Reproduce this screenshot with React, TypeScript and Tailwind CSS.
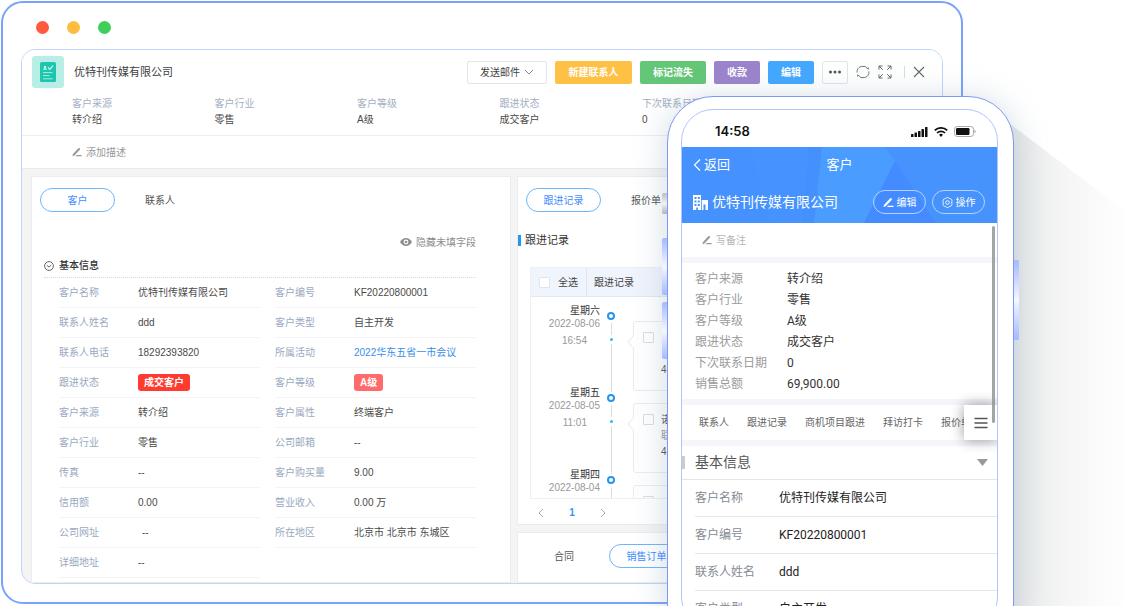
import React from "react";

type Field = {
  label: string;
  value: string;
  kind?: "link" | "red" | "coral" | "indent";
};

const summary: Field[] = [
  { label: "客户来源", value: "转介绍" },
  { label: "客户行业", value: "零售" },
  { label: "客户等级", value: "A级" },
  { label: "跟进状态", value: "成交客户" },
  { label: "下次联系日期", value: "0" },
];

const leftFields: Field[] = [
  { label: "客户名称", value: "优特刊传媒有限公司" },
  { label: "联系人姓名", value: "ddd" },
  { label: "联系人电话", value: "18292393820" },
  { label: "跟进状态", value: "成交客户", kind: "red" },
  { label: "客户来源", value: "转介绍" },
  { label: "客户行业", value: "零售" },
  { label: "传真", value: "--" },
  { label: "信用额", value: "0.00" },
  { label: "公司网址", value: "--", kind: "indent" },
  { label: "详细地址", value: "--" },
];

const rightFields: Field[] = [
  { label: "客户编号", value: "KF20220800001" },
  { label: "客户类型", value: "自主开发" },
  { label: "所属活动", value: "2022华东五省一市会议", kind: "link" },
  { label: "客户等级", value: "A级", kind: "coral" },
  { label: "客户属性", value: "终端客户" },
  { label: "公司邮箱", value: "--" },
  { label: "客户购买量", value: "9.00" },
  { label: "营业收入", value: "0.00 万" },
  { label: "所在地区", value: "北京市 北京市 东城区" },
];

const timeline = [
  { day: "星期六", date: "2022-08-06", time: "16:54", lines: ["", "", "4"] },
  { day: "星期五", date: "2022-08-05", time: "11:01", lines: ["诺", "联", "4"] },
  { day: "星期四", date: "2022-08-04", time: "", lines: ["", "", ""] },
];

const phoneSummary: Field[] = [
  { label: "客户来源", value: "转介绍" },
  { label: "客户行业", value: "零售" },
  { label: "客户等级", value: "A级" },
  { label: "跟进状态", value: "成交客户" },
  { label: "下次联系日期", value: "0" },
  { label: "销售总额", value: "69,900.00" },
];

const phoneFields: Field[] = [
  { label: "客户名称", value: "优特刊传媒有限公司" },
  { label: "客户编号", value: "KF20220800001" },
  { label: "联系人姓名", value: "ddd" },
  { label: "客户类型", value: "自主开发" },
];

function PencilIcon({ className }: { className: string }) {
  return (
    <svg viewBox="0 0 12 12" className={className} fill="currentColor" aria-hidden="true">
      <path d="M1 8.6 7.6 1.6a1.2 1.2 0 0 1 1.8 1.7L3 10.1.6 11z" />
      <path d="M5.6 9.6h5.9V11H4.4z" />
    </svg>
  );
}

function Chevron({ d, className }: { d: string; className: string }) {
  return (
    <svg viewBox="0 0 10 10" className={className} fill="none" stroke="currentColor" strokeWidth="1" aria-hidden="true">
      <path d={d} />
    </svg>
  );
}

function FieldValue({ field }: { field: Field }) {
  if (field.kind === "link") {
    return (
      <a href="#activity" className="text-[#3a8ee6]">
        {field.value}
      </a>
    );
  }
  if (field.kind === "red") {
    return <span className="rounded-[3px] bg-[#ff3b2f] px-[6px] py-[3px] font-bold text-white">{field.value}</span>;
  }
  if (field.kind === "coral") {
    return <span className="rounded-[3px] bg-[#ff6b6b] px-[6px] py-[3px] font-bold text-white">{field.value}</span>;
  }
  return <span className={field.kind === "indent" ? "pl-1" : ""}>{field.value}</span>;
}

function FieldList({ fields }: { fields: Field[] }) {
  return (
    <dl className="text-[10px] leading-[13px]">
      {fields.map((f) => (
        <div key={f.label} className="flex h-[30px] items-center border-b border-[#f3f3f5] whitespace-nowrap">
          <dt className="w-[79px] shrink-0 text-[#99a9bf]">{f.label}</dt>
          <dd className="text-[#4a4a4a]">
            <FieldValue field={f} />
          </dd>
        </div>
      ))}
    </dl>
  );
}

function RecordHeader() {
  return (
    <header className="bg-white">
      <div className="flex h-[46px] items-start justify-between pt-[6px] pr-[17px] pl-[10px]">
        <div className="flex items-center gap-[10px]">
          <span className="flex h-8 w-8 items-center justify-center rounded-[3px] bg-[#b9eee6]">
            <svg viewBox="0 0 16 20" className="h-5 w-4" fill="none" aria-hidden="true">
              <rect width="16" height="20" rx="1.5" fill="#1cc7ae" />
              <circle cx="5" cy="5" r="1.2" fill="#d5f6f1" />
              <path d="M3 7.8c0-2 4-2 4 0z" fill="#d5f6f1" />
              <path d="m8 5.5 1.8 1.8L13 3.6" stroke="#d5f6f1" strokeWidth="1.2" />
              <path d="M3 10.6h9.6M3 13.6h6.4M3 16.8h9.6" stroke="#a8ece1" strokeWidth="1" />
            </svg>
          </span>
          <h1 className="text-[11px] text-[#3d3d3d]">优特刊传媒有限公司</h1>
        </div>
        <div className="flex h-8 items-center gap-2 text-[10px] font-bold text-white">
          <button className="flex h-[23px] w-20 items-center justify-center gap-1 rounded-[2px] border border-[#e2e4ea] bg-white font-normal text-[#444]">
            发送邮件
            <Chevron d="m1 3 4 4 4-4" className="h-[10px] w-[10px] text-[#888]" />
          </button>
          <button className="h-[23px] w-[77px] rounded-[2px] bg-[#ffc145]">新建联系人</button>
          <button className="h-[23px] w-[66px] rounded-[2px] bg-[#64c677]">标记流失</button>
          <button className="h-[23px] w-[46px] rounded-[2px] bg-[#9c84cc]">收款</button>
          <button className="h-[23px] w-[46px] rounded-[2px] bg-[#43a8ff]">编辑</button>
          <button aria-label="更多" className="flex h-[23px] w-[26px] items-center justify-center rounded-[2px] border border-[#e2e4ea] bg-white text-[#555]">
            <svg viewBox="0 0 14 4" className="h-1 w-[14px]" fill="currentColor">
              <circle cx="2.5" cy="2" r="1.5" />
              <circle cx="7" cy="2" r="1.5" />
              <circle cx="11.5" cy="2" r="1.5" />
            </svg>
          </button>
          <button aria-label="刷新" className="text-[#777]">
            <svg viewBox="0 0 14 14" className="h-[14px] w-[14px]" fill="none" stroke="currentColor">
              <path d="M1.1 7.600A5.900 5.900 0 0 1 12 4M12.900 6.400A5.900 5.900 0 0 1 2 10" />
              <path d="M12.400 2.300V4.500M1.600 11.700V9.500" strokeWidth=".9" />
            </svg>
          </button>
          <button aria-label="全屏" className="text-[#666]">
            <svg viewBox="0 0 14 14" className="h-[14px] w-[14px]" fill="none" stroke="currentColor">
              <path d="M1 4.500V1h3.500M9.500 1H13v3.500M13 9.500V13H9.500M4.500 13H1V9.500M1.200 1.200l3.600 3.600M12.800 1.200 9.200 4.800M12.800 12.800 9.200 9.200M1.200 12.800l3.600-3.600" />
            </svg>
          </button>
          <span className="ml-1 h-3 w-px bg-[#ddd]" />
          <button aria-label="关闭" className="text-[#666]">
            <svg viewBox="0 0 12 12" className="h-3 w-3" fill="none" stroke="currentColor" strokeWidth="1.100">
              <path d="m1 1 10 10M11 1 1 11" />
            </svg>
          </button>
        </div>
      </div>
      <dl className="grid grid-cols-6 border-b border-[#eee] pr-[15px] pb-[7px] pl-[50px] text-[10px] leading-4">
        {summary.map((f) => (
          <div key={f.label} className="whitespace-nowrap">
            <dt className="text-[#a3afc2]">{f.label}</dt>
            <dd className="text-[#4a4a4a]">{f.value}</dd>
          </div>
        ))}
      </dl>
      <button className="flex h-[33px] w-full items-center gap-1 border-b border-[#ebebeb] pl-[50px] text-[10px] text-[#999]">
        <PencilIcon className="h-[10px] w-[10px]" />
        添加描述
      </button>
    </header>
  );
}

function CustomerPanel() {
  return (
    <section className="border border-[#ececee] bg-white pt-[11px] pb-1">
      <nav className="flex h-6 items-center pl-2 text-[10px]">
        <button className="h-6 w-[75px] rounded-full border border-[#6db6fb] text-[#3f8cff]">客户</button>
        <button className="ml-[30px] text-[#555]">联系人</button>
      </nav>
      <div className="pr-[34px] pl-3">
        <div className="mt-[22px] flex h-4 justify-end">
          <button className="flex items-center gap-1 text-[10px] text-[#8e8e8e]">
            <svg viewBox="0 0 12 8" className="h-2 w-3" aria-hidden="true">
              <path d="M0 4C3-1.200 9-1.200 12 4 9 9.200 3 9.200 0 4z" fill="#8e8e8e" />
              <circle cx="6" cy="4" r="2.400" fill="#fff" />
              <circle cx="6" cy="4" r="1.300" fill="#8e8e8e" />
            </svg>
            隐藏未填字段
          </button>
        </div>
        <h2 className="mt-1 flex h-6 items-center gap-[5px] border-b border-dotted border-[#d8d8d8] text-[10px] font-medium text-[#333]">
          <svg viewBox="0 0 10 10" className="h-[10px] w-[10px]" fill="none" stroke="#555" strokeWidth=".9" aria-hidden="true">
            <circle cx="5" cy="5" r="4.400" />
            <path d="m2.800 4.200 2.200 1.800 2.200-1.800" />
          </svg>
          基本信息
        </h2>
        <div className="grid grid-cols-2 gap-[15px] pl-[15px]">
          <FieldList fields={leftFields} />
          <FieldList fields={rightFields} />
        </div>
      </div>
    </section>
  );
}

function TimelineItem({ item }: { item: (typeof timeline)[number] }) {
  return (
    <li className="flex h-[82px] shrink-0">
      <div className="w-[69px] pt-[6px] text-right">
        <p className="text-[10px] leading-[14px] text-[#333]">{item.day}</p>
        <p className="text-[10px] leading-[12px] text-[#999]">{item.date}</p>
        <p className="mt-1 pr-[13px] text-[10px] leading-[14px] text-[#999]">{item.time}</p>
      </div>
      <div className="ml-[7px] flex w-2 flex-col items-center pt-[14px]">
        <span className="h-2 w-2 shrink-0 rounded-full border-2 border-[#2196f3]" />
        <span className="mt-[3px] h-[12px] w-px bg-[#ddd]" />
        <span className="my-[3px] h-[3px] w-[3px] shrink-0 rounded-full bg-[#1fc0f5]" />
        <span className="-mb-3 w-px flex-1 bg-[#ddd]" />
      </div>
      <div className="flex flex-1 pt-[23px] pl-[12px]">
        <svg viewBox="0 0 7 14" className="z-10 mt-[14px] -mr-px h-[14px] w-[7px] shrink-0" aria-hidden="true">
          <path d="M7 0 1 7l6 7" fill="#fff" stroke="#e3e6ee" />
        </svg>
        <div className="flex h-[70px] flex-1 gap-[7px] rounded-[3px] border border-[#eaecf2] bg-white pl-[9px]">
          <input type="checkbox" aria-label={item.day} className="mt-[10px] h-[11px] w-[11px] shrink-0 appearance-none rounded-[1px] border border-[#d9dce5] bg-white" />
          <div className="pt-2 text-[10px] text-[#555]">
            <p className="h-4">{item.lines[0]}</p>
            <p className="h-4 text-[#999]">{item.lines[1]}</p>
            <p className="h-4">{item.lines[2]}</p>
          </div>
        </div>
      </div>
    </li>
  );
}

function FollowColumn() {
  return (
    <div className="flex flex-col gap-[7px]">
      <section className="border border-[#ececee] bg-white pt-[11px]">
        <nav className="flex h-6 items-center pl-2 text-[10px]">
          <button className="h-6 w-[75px] rounded-full border border-[#6db6fb] text-[#3f8cff]">跟进记录</button>
          <button className="ml-[30px] text-[#555]">报价单</button>
        </nav>
        <h2 className="mt-[22px] flex h-3 items-center gap-1 text-[11px] text-[#333]">
          <span className="h-[11px] w-[3px] bg-[#2196f3]" />
          跟进记录
        </h2>
        <div className="mx-3 mt-[21px] border border-[#edf0f6]">
          <div className="flex h-[29px] items-center border-b border-[#e4e8f0] bg-[#f0f4fc] text-[10px] text-[#444]">
            <label className="flex h-full w-[56px] items-center gap-2 border-r border-[#e0e4ec] pl-2">
              <input type="checkbox" className="h-[11px] w-[11px] appearance-none rounded-[1px] border border-[#e0e3ea] bg-white" />
              全选
            </label>
            <span className="pl-[7px]">跟进记录</span>
          </div>
          <ul className="flex h-[201px] flex-col overflow-hidden pt-px">
            {timeline.map((item) => (
              <TimelineItem key={item.date} item={item} />
            ))}
          </ul>
        </div>
        <nav className="flex h-[25px] items-center gap-5 pt-[2px] pl-[18px]">
          <button aria-label="上一页" className="text-[#aaa]">
            <Chevron d="M7 1 3 5l4 4" className="h-[10px] w-[10px]" />
          </button>
          <button className="w-3 text-[10px] font-bold text-[#2f95ff]">1</button>
          <button aria-label="下一页" className="text-[#aaa]">
            <Chevron d="m3 1 4 4-4 4" className="h-[10px] w-[10px]" />
          </button>
        </nav>
      </section>
      <section className="flex-1 border border-[#ececee] bg-white pt-[11px]">
        <nav className="flex h-6 items-center pl-9 text-[10px]">
          <button className="text-[#555]">合同</button>
          <button className="ml-[35px] h-6 w-[75px] rounded-full border border-[#6db6fb] text-[#3f8cff]">销售订单</button>
        </nav>
      </section>
    </div>
  );
}

function StatusBar() {
  return (
    <div className="flex h-[37px] items-center justify-between pt-[6px] pr-[21px] pl-[33px] text-[#111]">
      <span className="font-[Inter,sans-serif] text-[13px] font-semibold">14:58</span>
      <span className="flex items-center gap-[6px]">
        <svg viewBox="0 0 17 10" className="h-[10px] w-[17px]" fill="currentColor" aria-hidden="true">
          <rect x="0" y="7" width="2.500" height="3" rx=".6" />
          <rect x="3.500" y="5.500" width="2.500" height="4.500" rx=".6" />
          <rect x="7" y="4" width="2.500" height="6" rx=".6" />
          <rect x="10.500" y="2" width="2.500" height="8" rx=".6" />
          <rect x="14" y="0" width="2.500" height="10" rx=".6" />
        </svg>
        <svg viewBox="0 0 14 10" className="h-[10px] w-[14px]" fill="none" stroke="currentColor" strokeWidth="1.700" aria-hidden="true">
          <path d="M.8 3.400a8.800 8.800 0 0 1 12.400 0M3 6a5.700 5.700 0 0 1 8 0" />
          <path d="m7 10-2-2.200a2.900 2.900 0 0 1 4 0z" fill="currentColor" stroke="none" />
        </svg>
        <svg viewBox="0 0 22 11" className="h-[11px] w-[22px]" aria-hidden="true">
          <rect x=".5" y=".5" width="19" height="10" rx="2.800" fill="none" stroke="#aaa" />
          <rect x="2" y="2" width="13.500" height="7" rx="1.300" fill="#111" />
          <path d="M20.500 3.800c1.500.4 1.500 3 0 3.400z" fill="#999" />
        </svg>
      </span>
    </div>
  );
}

function PhoneHeader() {
  return (
    <header className="relative h-[76px] bg-[#4693ff] text-white">
      <svg viewBox="0 0 315 76" preserveAspectRatio="none" className="absolute inset-0 h-full w-full" aria-hidden="true">
        <path d="M0 0h69l18 76H0z" fill="#4591fd" />
        <path d="M127 0h13l-8 76h-12z" fill="#4491fd" />
        <path d="M140 0h63l10 14-31 62h-50z" fill="#4a9cff" />
        <path d="m213 14 41 62h-72z" fill="#438bff" />
        <path d="M203 0h112v76h-61l-41-62z" fill="#4693fe" />
      </svg>
      <div className="relative grid h-9 grid-cols-3 items-center px-[11px] text-[13px]">
        <a href="#back" className="flex items-center gap-[3px]">
          <svg viewBox="0 0 8 12" className="h-3 w-2" fill="none" stroke="currentColor" strokeWidth="1.200" aria-hidden="true">
            <path d="M7 .5 1.500 6 7 11.500" />
          </svg>
          返回
        </a>
        <span className="text-center">客户</span>
      </div>
      <div className="relative flex h-[38px] items-center justify-between pr-3 pl-[11px]">
        <h2 className="flex items-center gap-[4px] text-[14px]">
          <svg viewBox="0 0 15 15" className="h-[15px] w-[15px]" aria-hidden="true">
            <path d="M0 0h8v15H0zM8 5h7v10H8z" fill="#fff" />
            <path d="M1.500 2h2v2h-2zM4.800 2h2v2h-2zM1.500 5.500h2v2h-2zM4.800 5.500h2v2h-2zM1.500 9h2v2h-2zM4.800 9h2v2h-2zM3.200 12.500h1.800V15H3.200zM8 5h.8v10H8zM10.500 9.500h2V15h-2z" fill="#4693ff" />
          </svg>
          优特刊传媒有限公司
        </h2>
        <div className="flex gap-[6px] text-[10px]">
          <button className="flex h-6 w-[53px] items-center justify-center gap-[3px] rounded-full border border-[#b5d2ff]">
            <PencilIcon className="h-[11px] w-[11px]" />
            编辑
          </button>
          <button className="flex h-6 w-[53px] items-center justify-center gap-[3px] rounded-full border border-[#b5d2ff]">
            <svg viewBox="0 0 12 12" className="h-[11px] w-[11px]" fill="none" stroke="currentColor" aria-hidden="true">
              <path d="M4.700.9Q6 .2 7.300.9l.9.9 1.300.1q1.300.6 1.400 2L10.700 5.200v1.600l.2 1.300q-.1 1.400-1.400 2l-1.300.1-.9.900Q6 11.800 4.700 11.100l-.9-.9-1.300-.1q-1.300-.6-1.400-2L1.300 6.800V5.200L1.100 3.900q.1-1.400 1.400-2l1.300-.1z" />
              <circle cx="6" cy="6" r="2" />
            </svg>
            操作
          </button>
        </div>
      </div>
    </header>
  );
}

function Phone() {
  return (
    <aside className="absolute top-[96px] right-[110px] w-[347px]">
      <span className="absolute top-[97px] -left-[5px] h-[21px] w-[5px] rounded-l-[2px] bg-linear-to-b from-[#b9bcc4] via-[#f2f2f4] to-[#b0b3bc]" />
      <span className="absolute top-[142px] -left-[5px] h-[57px] w-[5px] rounded-l-[2px] bg-linear-to-b from-[#a5b8fd] via-[#f4f6ff] to-[#a5b8fd]" />
      <span className="absolute top-[206px] -left-[5px] h-[57px] w-[5px] rounded-l-[2px] bg-linear-to-b from-[#a5b8fd] via-[#f4f6ff] to-[#a5b8fd]" />
      <span className="absolute top-[164px] -right-[5px] h-[80px] w-[5px] rounded-r-[2px] bg-linear-to-b from-[#a5b8fd] via-[#f4f6ff] to-[#a5b8fd]" />
      <div className="rounded-[46px] border border-[#7f98f3] bg-white pt-3 pr-[15px] pb-5 pl-[13px] shadow-[0_4px_34px_rgba(110,140,165,0.32)]">
        <div className="relative overflow-hidden rounded-[32px] border border-[#b3c4fb] font-[Roboto,'Noto_Sans_CJK_SC',sans-serif]">
          <StatusBar />
          <PhoneHeader />
          <button className="flex h-[34px] w-full items-center gap-1 pl-5 text-[10px] text-[#b5b5b5]">
            <PencilIcon className="h-[10px] w-[10px] text-[#999]" />
            写备注
          </button>
          <div className="h-[6px] bg-[#f5f6fb]" />
          <dl className="pt-[6px] pb-1 pl-[13px] text-[12px] leading-[21px]">
            {phoneSummary.map((f) => (
              <div key={f.label} className="flex">
                <dt className="w-[92px] text-[#9b9b9b]">{f.label}</dt>
                <dd className="text-[#333]">{f.value}</dd>
              </div>
            ))}
          </dl>
          <div className="h-[6px] bg-[#f5f6fb]" />
          <nav className="flex h-[35px] items-center text-[10px] text-[#666]">
            <div className="flex flex-1 gap-[18px] overflow-hidden pl-[17px] whitespace-nowrap">
              <a href="#contacts">联系人</a>
              <a href="#follow">跟进记录</a>
              <a href="#project">商机项目跟进</a>
              <a href="#visit">拜访打卡</a>
              <a href="#quote">报价单</a>
            </div>
            <button aria-label="菜单" className="relative flex h-[35px] w-[33px] items-center justify-center bg-white shadow-[0_0_14px_rgba(0,0,0,0.4)]">
              <svg viewBox="0 0 14 12" className="h-3 w-[14px]" stroke="#555" strokeWidth="1.400" aria-hidden="true">
                <path d="M.5 1.500h13M.5 6h13M.5 10.500h13" />
              </svg>
            </button>
          </nav>
          <div className="h-[6px] bg-[#f5f6fb]" />
          <div className="flex h-[34px] items-center justify-between border-b border-[#e5e5e5] pr-[9px]">
            <h3 className="flex items-center gap-[10px] text-[14px] text-[#555]">
              <span className="h-[13px] w-[3px] bg-[#ccc]" />
              基本信息
            </h3>
            <svg viewBox="0 0 11 7" className="h-[7px] w-[11px]" fill="#999" aria-hidden="true">
              <path d="M0 0h11L5.500 7z" />
            </svg>
          </div>
          <dl className="pl-[13px] text-[12px]">
            {phoneFields.map((f) => (
              <div key={f.label} className="flex h-[37px] items-center border-b border-[#e8e8e8]">
                <dt className="w-[84px] text-[#858b94]">{f.label}</dt>
                <dd className="text-[#222]">{f.value}</dd>
              </div>
            ))}
          </dl>
          <span className="absolute top-[116px] right-[2px] h-[197px] w-[3px] rounded-full bg-[#8f8f8f]/80" />
        </div>
      </div>
    </aside>
  );
}

export default function App() {
  return (
    <main className="relative h-screen overflow-hidden bg-white pt-px pr-[161px] pl-px font-['Liberation_Sans','Noto_Sans_CJK_SC',sans-serif]">
      <div className="rounded-[22px] border-2 border-[#76a3fd] bg-white px-[18px] pb-[18px]">
        <div className="flex h-[46px] items-center gap-[18px] pt-[3px] pl-[15px]">
          <span className="h-[13px] w-[13px] rounded-full bg-[#ff5a3d]" />
          <span className="h-[13px] w-[13px] rounded-full bg-[#ffbd3e]" />
          <span className="h-[13px] w-[13px] rounded-full bg-[#3fcf58]" />
        </div>
        <div className="overflow-hidden rounded-[14px] border border-[#c0d5fd] bg-[#f4f4f5]">
          <RecordHeader />
          <div className="grid grid-cols-[480fr_416fr] gap-[6px] px-[9px] pt-[7px]">
            <CustomerPanel />
            <FollowColumn />
          </div>
        </div>
      </div>
      <div className="absolute top-[124px] right-0 bottom-0 w-[114px] bg-linear-to-r from-[#e6e8e9] via-[#f6f6f6] to-[#fefefe] [clip-path:polygon(0_0,100%_86px,100%_100%,0_100%)]" />
      <Phone />
    </main>
  );
}
